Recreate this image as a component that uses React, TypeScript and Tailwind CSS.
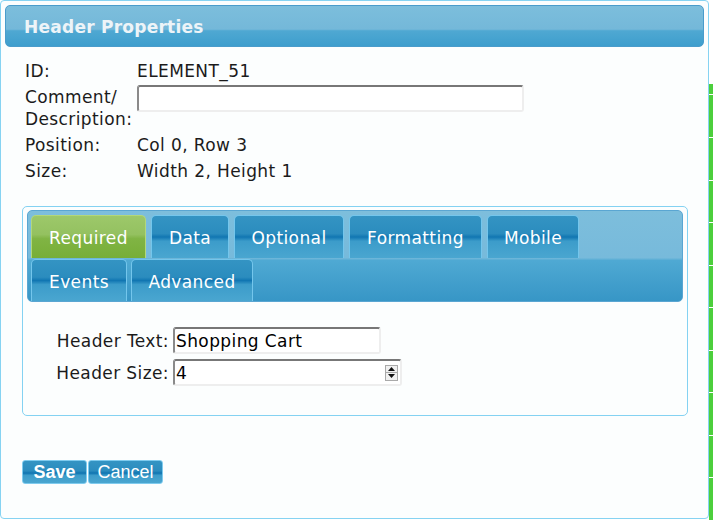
const tabRowOne = [
  { label: "Required", width: "w-[115px]", active: true },
  { label: "Data", width: "w-[78px]", active: false },
  { label: "Optional", width: "w-[110px]", active: false },
  { label: "Formatting", width: "w-[133px]", active: false },
  { label: "Mobile", width: "w-[92px]", active: false },
];

const tabRowTwo = [
  { label: "Events", width: "w-[96px]", active: false },
  { label: "Advanced", width: "w-[122px]", active: false },
];

const blueTab =
  "bg-[linear-gradient(to_bottom,#3494c3_0%,#2b8cbe_42%,#1176b2_50%,#3c9cca_60%,#4aa6d0_100%)] border-[#74c6ec]";
const greenTab =
  "bg-[linear-gradient(to_bottom,#9dc86a_0%,#94c160_44%,#80b444_54%,#77ae37_100%)] border-[#b3d77a]";

function Tab({ label, width, active }: { label: string; width: string; active: boolean }) {
  return (
    <div
      className={`${width} h-full flex items-center justify-center pt-[2px] border border-b-0 rounded-t-[5px] text-white text-[17px] tracking-[0.4px] ${
        active ? greenTab : blueTab
      }`}
    >
      {label}
    </div>
  );
}

function Spinner() {
  return (
    <div className="flex flex-col w-[13px] h-[16px] mr-[2px]">
      <div className="flex-1 flex items-center justify-center border border-[#a9a9a9] bg-[#f0f0f0]">
        <svg width="7" height="4" viewBox="0 0 7 4">
          <path d="M0 4 L3.5 0 L7 4 Z" fill="#111" />
        </svg>
      </div>
      <div className="flex-1 flex items-center justify-center border border-t-0 border-[#a9a9a9] bg-[#f0f0f0]">
        <svg width="7" height="4" viewBox="0 0 7 4">
          <path d="M0 0 L3.5 4 L7 0 Z" fill="#111" />
        </svg>
      </div>
    </div>
  );
}

const inputBox =
  "h-[27px] border-2 border-t-[#777777] border-l-[#8a8a8a] border-r-[#eeeeee] border-b-[#eeeeee] rounded-[3px] bg-white";

export default function App() {
  return (
    <div
      className="flex w-[713px] h-[520px] bg-white text-[#1b1b1b] text-[17px] leading-[22px] tracking-[0.4px]"
      style={{ fontFamily: '"DejaVu Sans", Verdana, sans-serif' }}
    >
      {/* Dialog */}
      <div className="w-[709px] h-[519px] border border-[#86d3f2] rounded-[4px] bg-[#fcfefe] p-[4px] flex flex-col">
        {/* Title bar */}
        <div className="h-[42px] flex items-center pl-[18px] pt-[1px] border border-[#4a9ccb] rounded-[5px] bg-[linear-gradient(to_bottom,#7cbedc_0%,#74b8d9_58%,#4fa8d2_62%,#3e9ecd_100%)]">
          <span className="text-[17px] font-bold tracking-[0.25px] text-[#edf4f8]">Header Properties</span>
        </div>

        {/* Element info */}
        <div className="grid grid-cols-[112px_1fr] ml-[20px] mt-[11px]">
          <div className="py-[2px]">ID:</div>
          <div className="py-[2px]">ELEMENT_51</div>
          <div className="py-[2px]">
            Comment/
            <br />
            Description:
          </div>
          <div className="py-[1px]">
            <input className={`${inputBox} w-[387px] px-[2px] outline-none`} />
          </div>
          <div className="py-[2px]">Position:</div>
          <div className="py-[2px]">Col 0, Row 3</div>
          <div className="py-[2px]">Size:</div>
          <div className="py-[2px]">Width 2, Height 1</div>
        </div>

        {/* Tab panel */}
        <div className="ml-[17px] mt-[22px] w-[666px] h-[210px] border border-[#84d2f2] rounded-[5px] bg-[#fcfefe] px-[4px] pt-[3px]">
          <div className="h-[92px] border border-[#5aa6d2] rounded-[5px] px-[3px] pt-[4px] flex flex-col gap-[1px] bg-[linear-gradient(to_bottom,#7dbedc_0%,#77badb_52%,#4fa9d3_55%,#3796c6_100%)]">
            <div className="flex gap-[5px] h-[43px]">
              {tabRowOne.map((tab) => (
                <Tab key={tab.label} {...tab} />
              ))}
            </div>
            <div className="flex gap-[4px] h-[42px]">
              {tabRowTwo.map((tab) => (
                <Tab key={tab.label} {...tab} />
              ))}
            </div>
          </div>

          <div className="grid grid-cols-[113px_auto] gap-x-[5px] gap-y-[5px] ml-[28px] mt-[25px] w-fit">
            <div className="text-right pt-[3px] -mr-[1px] whitespace-nowrap">Header Text:</div>
            <input
              className={`${inputBox} w-[208px] px-[1px] pt-[1px] text-[17px] tracking-[0.4px] text-black outline-none`}
              defaultValue="Shopping Cart"
            />
            <div className="text-right pt-[3px] -mr-[1px] whitespace-nowrap">Header Size:</div>
            <div className={`${inputBox} w-[229px] flex items-center`}>
              <input
                className="flex-1 min-w-0 px-[1px] pt-[1px] text-[17px] tracking-[0.4px] text-black outline-none bg-transparent"
                defaultValue="4"
              />
              <Spinner />
            </div>
          </div>
        </div>

        {/* Actions */}
        <div
          className="flex gap-[1px] ml-[17px] mt-[44px] tracking-normal"
          style={{ fontFamily: '"Liberation Sans", Arial, sans-serif' }}
        >
          <button className="w-[65px] h-[24px] border border-[#7fcbee] rounded-[3px] text-white text-[18px] font-bold leading-none bg-[linear-gradient(to_bottom,#3494c3_0%,#2b8cbe_45%,#0f74b1_55%,#3c9cca_65%,#4aa6d0_100%)]">
            Save
          </button>
          <button className="w-[75px] h-[24px] border border-[#7fcbee] rounded-[3px] text-white text-[18px] leading-none bg-[linear-gradient(to_bottom,#3494c3_0%,#2b8cbe_45%,#0f74b1_55%,#3c9cca_65%,#4aa6d0_100%)]">
            Cancel
          </button>
        </div>
      </div>

      {/* Neighbouring column peeking out behind the dialog */}
      <div className="w-[4px] flex flex-col pt-[84px]">
        <div className="h-[11px] bg-[#4ccf3c]" />
        {Array.from({ length: 10 }).map((_, i) => (
          <div key={i} className="mt-[1px] h-[44px] bg-[#4ccf3c]" />
        ))}
      </div>
    </div>
  );
}
